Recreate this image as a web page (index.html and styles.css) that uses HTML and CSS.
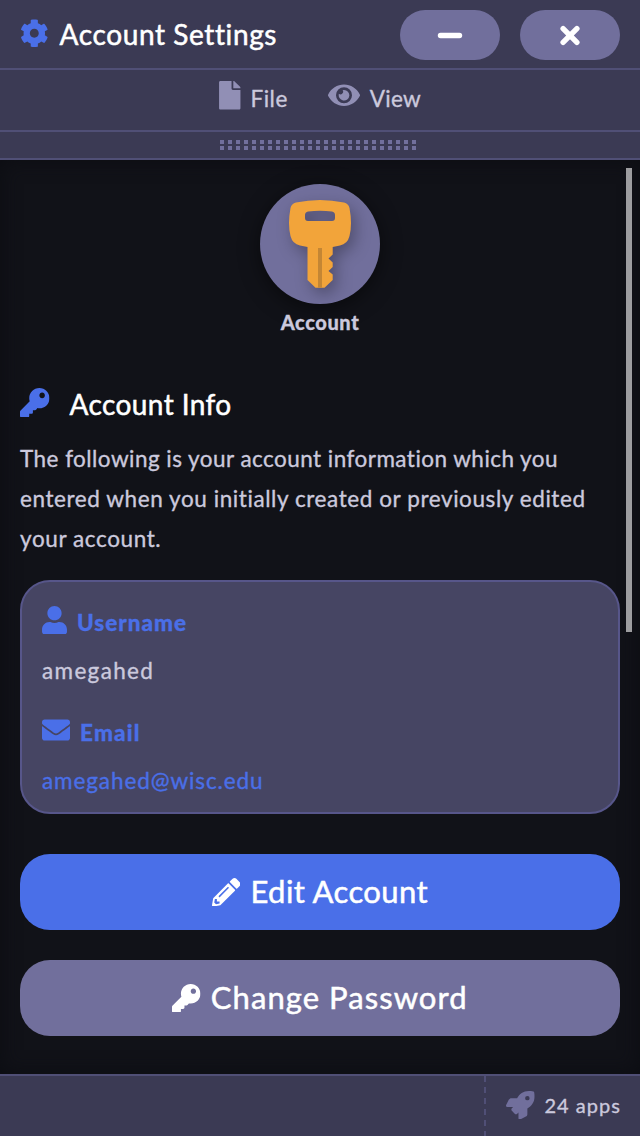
FILE: index.html
```html
<!DOCTYPE html>
<html lang="en">
<head>
<meta charset="utf-8">
<title>Account Settings</title>
<link rel="stylesheet" href="styles.css">
</head>
<body>
<svg class="defs" width="0" height="0" aria-hidden="true">
  <symbol id="key" viewBox="0 0 512 512"><path d="M512 176.001C512 273.203 433.202 352 336 352c-11.22 0-22.19-1.062-32.827-3.069l-24.012 27.014A23.999 23.999 0 0 1 261.223 384H224v40c0 13.255-10.745 24-24 24h-40v40c0 13.255-10.745 24-24 24H24c-13.255 0-24-10.745-24-24v-78.059c0-6.365 2.529-12.47 7.029-16.971l161.802-161.802C163.108 213.814 160 195.271 160 176 160 78.798 238.797.001 335.999 0 433.488-.001 512 78.511 512 176.001zM336 128c0 26.51 21.49 48 48 48s48-21.49 48-48-21.49-48-48-48-48 21.49-48 48z"/></symbol>
</svg>
<div class="window">
  <header class="titlebar">
    <svg class="icon cog" viewBox="0 0 512 512"><path d="M487.4 315.7l-42.6-24.6c4.3-23.2 4.3-47 0-70.2l42.6-24.6c4.9-2.8 7.1-8.6 5.5-14-11.1-35.6-30-67.8-54.7-94.6-3.8-4.1-10-5.1-14.8-2.3L380.8 110c-17.9-15.4-38.5-27.3-60.8-35.1V25.8c0-5.6-3.9-10.5-9.4-11.7-36.7-8.2-74.3-7.8-109.2 0-5.5 1.2-9.4 6.1-9.4 11.7V75c-22.2 7.9-42.8 19.8-60.8 35.1L88.7 85.5c-4.9-2.8-11-1.9-14.8 2.3-24.7 26.7-43.6 58.9-54.7 94.6-1.7 5.4.6 11.2 5.5 14L67.3 221c-4.3 23.2-4.3 47 0 70.2l-42.6 24.6c-4.9 2.8-7.1 8.6-5.5 14 11.1 35.6 30 67.8 54.7 94.6 3.8 4.1 10 5.1 14.8 2.3l42.6-24.6c17.9 15.4 38.5 27.3 60.8 35.1v49.2c0 5.6 3.9 10.5 9.4 11.7 36.7 8.2 74.3 7.8 109.2 0 5.5-1.2 9.4-6.1 9.4-11.7v-49.2c22.2-7.9 42.8-19.8 60.8-35.1l42.6 24.6c4.9 2.8 11 1.9 14.8-2.3 24.7-26.7 43.6-58.9 54.7-94.6 1.5-5.5-.7-11.3-5.6-14.1zM256 336c-44.1 0-80-35.9-80-80s35.9-80 80-80 80 35.9 80 80-35.9 80-80 80z"/></svg>
    <h1 class="title">Account Settings</h1>
    <div class="controls">
      <button class="control" aria-label="Minimize"><svg width="28" height="28" viewBox="0 0 28 28"><path d="M4.500 14.500H23.500" stroke="#fff" stroke-width="5.400" stroke-linecap="round" fill="none"/></svg></button>
      <button class="control" aria-label="Close"><svg width="28" height="28" viewBox="0 0 28 28"><path d="M7.1 7.600 20.900 21.400M20.900 7.600 7.100 21.400" stroke="#fff" stroke-width="5.400" stroke-linecap="round" fill="none"/></svg></button>
    </div>
  </header>
  <nav class="menubar">
    <a class="menu-item"><svg class="file" viewBox="0 0 384 512"><path d="M224 136V0H24C10.7 0 0 10.7 0 24v464c0 13.3 10.7 24 24 24h336c13.3 0 24-10.7 24-24V160H248c-13.2 0-24-10.8-24-24zm160-14.1v6.1H256V0h6.1c6.4 0 12.5 2.5 17 7l97.9 98c4.5 4.5 7 10.6 7 16.9z"/></svg><span class="menu-file">File</span></a>
    <a class="menu-item"><svg class="eye" viewBox="0 0 576 512"><path d="M572.52 241.4C518.29 135.59 410.93 64 288 64S57.68 135.64 3.48 241.41a32.35 32.35 0 0 0 0 29.19C57.71 376.41 165.07 448 288 448s230.32-71.64 284.52-177.41a32.35 32.35 0 0 0 0-29.19zM288 400a144 144 0 1 1 144-144 143.93 143.93 0 0 1-144 144zm0-240a95.31 95.31 0 0 0-25.31 3.79 47.85 47.85 0 0 1-66.9 66.9A95.78 95.78 0 1 0 288 160z"/></svg><span class="menu-view">View</span></a>
  </nav>
  <div class="grip"><div class="dots"></div></div>
  <main class="content">
    <div class="scrollbar"></div>
    <div class="hero">
      <div class="badge"><svg class="big-key" width="120" height="120" viewBox="0 0 120 120">
        <path fill="#f2a43a" fill-rule="evenodd" d="M36 18.500Q60 13.500 84 18.500Q88.500 19.500 89.500 24Q92.500 40 89.500 52Q87.500 60 80 61.500L72.700 63V70.500L68.500 74.500L72.700 78.500V83L68.500 87L72.700 90.500V96L64.500 103.700H55.500L47.500 96V63L40 61.500Q32.500 60 30.500 52Q27.500 40 30.500 24Q31.500 19.500 36 18.500ZM48 27.500Q60 26 72 27.500Q75 28 75 31V34Q75 37 72 37H48Q45 37 45 34V31Q45 28 48 27.500Z"/>
        <path fill="#c48634" d="M58 64h4v39.700h-4z"/></svg></div>
      <div class="hero-name">Account</div>
    </div>
    <h2 class="section"><svg class="section-key"><use href="#key"/></svg><span>Account Info</span></h2>
    <p class="intro"><span class="l1">The following is your account information which you</span><br><span class="l2">entered when you initially created or previously edited</span><br><span class="l3">your account.</span></p>
    <section class="card">
      <div class="label"><svg class="user" viewBox="0 0 448 512"><path d="M224 256c70.7 0 128-57.3 128-128S294.7 0 224 0 96 57.3 96 128s57.3 128 128 128zm89.600 32h-16.700c-22.200 10.200-46.900 16-72.900 16s-50.600-5.800-72.900-16h-16.700C60.200 288 0 348.200 0 422.400V464c0 26.500 21.500 48 48 48h352c26.500 0 48-21.500 48-48v-41.600c0-74.200-60.200-134.400-134.400-134.400z"/></svg><span class="username-label">Username</span></div>
      <div class="value"><span class="username">amegahed</span></div>
      <div class="label email-row"><svg class="mail" viewBox="0 0 512 512"><path d="M502.3 190.8c3.9-3.1 9.7-.2 9.7 4.700V400c0 26.500-21.500 48-48 48H48c-26.500 0-48-21.500-48-48V195.600c0-5 5.700-7.800 9.700-4.700 22.400 17.400 52.100 39.500 154.100 113.600 21.100 15.400 56.700 47.800 92.200 47.600 35.700.3 72-32.800 92.300-47.600 102-74.100 131.600-96.300 154-113.700zM256 320c23.200.4 56.600-29.200 73.400-41.400 132.700-96.300 142.800-104.700 173.400-128.700 5.800-4.500 9.200-11.500 9.200-18.900v-19c0-26.500-21.500-48-48-48H48c-26.500 0-48 21.500-48 48v19c0 7.400 3.400 14.300 9.200 18.900 30.600 23.900 40.700 32.400 173.400 128.700 16.800 12.200 50.200 41.800 73.400 41.400z"/></svg><span class="email-label">Email</span></div>
      <div class="value"><a class="email">amegahed@wisc.edu</a></div>
    </section>
    <button class="action primary"><svg class="action-icon" viewBox="0 0 512 512"><path d="M497.9 142.100l-46.100 46.100c-4.700 4.700-12.300 4.700-17 0l-111-111c-4.700-4.700-4.700-12.300 0-17l46.100-46.100c18.700-18.700 49.100-18.700 67.900 0l60.100 60.100c18.800 18.700 18.800 49.100 0 67.900zM284.200 99.800L21.600 362.400.4 483.900c-2.900 16.400 11.400 30.600 27.800 27.800l121.500-21.300 262.600-262.600c4.700-4.700 4.700-12.300 0-17l-111-111c-4.800-4.700-12.400-4.700-17.100 0zM124.100 339.900c-5.500-5.500-5.500-14.300 0-19.800l154-154c5.500-5.500 14.300-5.500 19.800 0s5.500 14.300 0 19.800l-154 154c-5.500 5.500-14.300 5.500-19.800 0zM88 424h48v36.300l-64.500 11.300-31.100-31.100L51.700 376H88v48z"/></svg><span class="edit-text">Edit Account</span></button>
    <button class="action"><svg class="action-icon"><use href="#key"/></svg><span class="password-text">Change Password</span></button>
  </main>
  <footer class="statusbar">
    <div class="apps"><svg class="rocket" viewBox="0 0 512 512"><path d="M505.12 19.094c-1.190-5.531-6.658-11-12.207-12.188C460.716 0 435.507 0 410.407 0 307.175 0 245.269 55.203 199.052 128H94.838c-16.348.016-35.557 11.875-42.887 26.484L2.516 253.297A28.400 28.400 0 0 0 0 264a24.009 24.009 0 0 0 24.006 24h103.810l-22.474 22.469c-11.366 11.361-12.997 32.258 0 45.250l50.904 50.906c11.156 11.188 32.156 13.156 45.277 0l22.475-22.469V488a24.009 24.009 0 0 0 24.006 24 28.559 28.559 0 0 0 10.707-2.516l98.728-49.390c14.629-7.297 26.508-26.500 26.508-42.860V312.797c72.598-46.313 128.035-108.406 128.035-211.094C512.075 76.500 512.075 51.297 505.120 19.094ZM384.040 168A40 40 0 1 1 424.050 128 40.023 40.023 0 0 1 384.040 168Z"/></svg><span class="apps-text">24 apps</span></div>
  </footer>
</div>
</body>
</html>
```
FILE: styles.css
```css
* { box-sizing: border-box; }
body { margin: 0; font-family: Lato, "Liberation Sans", sans-serif; background: #111218; font-variant-ligatures: none; }
.defs { position: absolute; }
svg { display: block; flex: none; fill: currentColor; }
span, a { white-space: nowrap; }
button { border: 0; padding: 0; font-family: inherit; color: #fff; }
.window { width: 640px; height: 1136px; display: flex; flex-direction: column; overflow: hidden; color: #cbc9dd; font-size: 22.5px; }

.titlebar { height: 70px; flex: none; display: flex; align-items: center; padding: 0 20px; background: #3b3a54; border-bottom: 2px solid #504f76; }
.cog { width: 28.600px; height: 28.600px; color: #4a6fe8; margin-top: -2px; }
.title { margin: 0 0 0 11px; font-size: 28px; line-height: 40px; font-weight: 400; color: #fff; -webkit-text-stroke: .5px; letter-spacing: .6px; }
.controls { display: flex; gap: 20px; margin-left: auto; }
.control { width: 100px; height: 50px; margin-top: 2px; border-radius: 25px; background: #716f9c; display: flex; align-items: center; justify-content: center; }

.menubar { height: 62px; flex: none; display: flex; padding: 11px 0 0 219px; gap: 40px; background: #3b3a54; border-bottom: 2px solid #504f76; }
.menu-item { display: flex; line-height: 36px; }
.menu-item svg { color: #918fb5; }
.file { width: 21.500px; height: 28.500px; margin-right: 10px; }
.eye { width: 32px; height: 28.500px; margin-right: 10px; }
.menu-file { letter-spacing: .5px; }
.menu-view { letter-spacing: .3px; }

.grip { height: 28px; flex: none; background: #3b3a54; border-bottom: 2px solid #504f76; display: flex; justify-content: center; padding: 8px 0 0; }
.dots { width: 200px; height: 10px; background: repeating-linear-gradient(90deg, transparent 0 4px, #3b3a54 4px 8px), linear-gradient(#716f9c 4px, #3b3a54 4px 6px, #716f9c 6px); }

.content { position: relative; flex: 1; min-height: 0; padding: 24px 20px 0; background: #111218; box-shadow: inset 0 0 20px #0c0d12; }
.scrollbar { position: absolute; right: 8px; top: 8px; width: 6px; height: 464px; background: #9d9da0; }
.hero { display: flex; flex-direction: column; align-items: center; }
.badge { width: 120px; height: 120px; border-radius: 50%; background: #716f9c; box-shadow: 0 4px 20px rgba(0,0,0,.5); overflow: hidden; }
.big-key { filter: drop-shadow(4px 6px 8px rgba(0,0,0,.3)); }
.hero-name { font-size: 20px; font-weight: 900; line-height: 24px; margin-top: 6px; letter-spacing: .6px; -webkit-text-stroke: .3px; }
.section { height: 40px; margin: 50px 0 0; display: flex; align-items: center; color: #fff; font-size: 28px; line-height: 40px; font-weight: 400; letter-spacing: .4px; -webkit-text-stroke: .5px; }
.section-key { width: 29.500px; height: 29.500px; margin: -3px 20px 0 0; color: #4a6fe8; }
.intro { margin: 15px 0 0; line-height: 40px; }
.intro, .menu-item, .value, .apps { -webkit-text-stroke: .35px; }
.l1 { letter-spacing: .46px; }
.l2 { letter-spacing: .58px; }
.l3 { letter-spacing: .6px; }
.card { height: 234px; margin-top: 21px; padding: 20px; border: 2px solid #57568a; border-radius: 30px; background: #464563; }
.label { display: flex; align-items: center; height: 40px; color: #4a6fe8; font-weight: 900; -webkit-text-stroke: .3px; }
.user { width: 25px; height: 28.500px; margin: -4px 10px 0 0; }
.mail { width: 28px; height: 28px; margin: -5px 10px 0 0; }
.username-label { letter-spacing: 1px; }
.email-label { letter-spacing: 1.200px; }
.email-row { margin-top: 22px; }
.value { height: 40px; line-height: 42px; margin-top: 8px; }
.username { letter-spacing: 1.350px; }
.email { color: #4a6fe8; letter-spacing: .9px; }
.action { width: 600px; height: 76px; margin-top: 30px; border-radius: 30px; background: #716f9c; display: flex; align-items: center; justify-content: center; gap: 10px; font-size: 31px; -webkit-text-stroke: .5px; }
.action span { margin-top: -2px; }
.edit-text { letter-spacing: .4px; }
.password-text { letter-spacing: 1.050px; }
.primary { margin-top: 40px; background: #4a6fe8; }
.action-icon { width: 28.500px; height: 28.500px; }

.statusbar { height: 62px; flex: none; display: flex; justify-content: flex-end; background: #3b3a54; border-top: 2px solid #504f76; }
.apps { width: 156px; display: flex; align-items: center; padding-left: 20px; position: relative; font-size: 20px; }
.apps::before { content: ""; position: absolute; left: 0; top: 0; width: 2px; height: 60px; background: repeating-linear-gradient(#504f76 0 6px, transparent 6px 11px); }
.rocket { width: 28.500px; height: 28.500px; color: #716f9c; margin: -2px 10px 0 2px; }
.apps-text { letter-spacing: 1px; margin-top: -3px; }
```
